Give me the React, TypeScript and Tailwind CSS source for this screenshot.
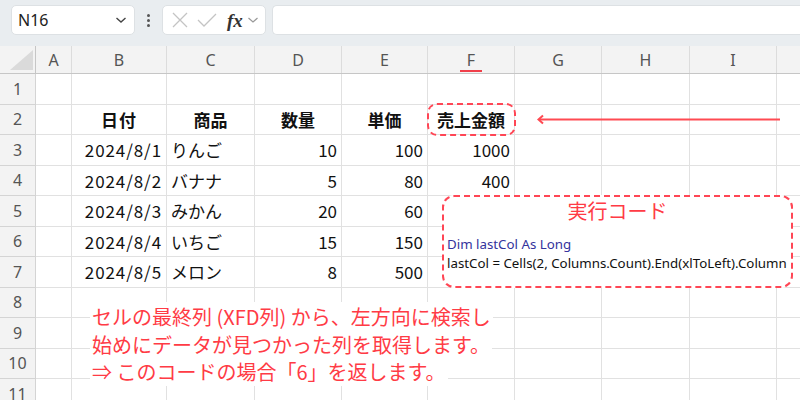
import React from "react";

const colWidths = [36, 95, 88, 87, 86, 87, 87, 88, 87, 87];
const letters = ["A", "B", "C", "D", "E", "F", "G", "H", "I", ""];

type Cell = { text: string; align?: "left" | "right" | "center"; bold?: boolean };

const data: Cell[][] = [
  [],
  [
    { text: "" },
    { text: "日付", align: "center", bold: true },
    { text: "商品", align: "center", bold: true },
    { text: "数量", align: "center", bold: true },
    { text: "単価", align: "center", bold: true },
    { text: "売上金額", align: "center", bold: true },
  ],
  [
    { text: "" },
    { text: "2024/8/1", align: "right" },
    { text: "りんご" },
    { text: "10", align: "right" },
    { text: "100", align: "right" },
    { text: "1000", align: "right" },
  ],
  [
    { text: "" },
    { text: "2024/8/2", align: "right" },
    { text: "バナナ" },
    { text: "5", align: "right" },
    { text: "80", align: "right" },
    { text: "400", align: "right" },
  ],
  [
    { text: "" },
    { text: "2024/8/3", align: "right" },
    { text: "みかん" },
    { text: "20", align: "right" },
    { text: "60", align: "right" },
  ],
  [
    { text: "" },
    { text: "2024/8/4", align: "right" },
    { text: "いちご" },
    { text: "15", align: "right" },
    { text: "150", align: "right" },
  ],
  [
    { text: "" },
    { text: "2024/8/5", align: "right" },
    { text: "メロン" },
    { text: "8", align: "right" },
    { text: "500", align: "right" },
  ],
  [],
  [],
  [],
  [],
];

const font = { fontFamily: '"Noto Sans CJK JP", "Noto Sans", sans-serif' };

function Toolbar() {
  return (
    <div className="h-[46px] bg-[#e9edf0] flex items-start pt-[5px] pl-[11px]">
      {/* Name box */}
      <div className="w-[124px] h-[30px] bg-white rounded-[5px] border border-[#dde1e4] flex items-center justify-between pl-[6px] pr-[7px]">
        <span className="text-[16px] text-[#222]" style={{ fontFamily: '"Noto Sans", sans-serif' }}>
          N16
        </span>
        <svg width="12" height="8" viewBox="0 0 12 8">
          <path d="M1.5 2 L6 6 L10.5 2" fill="none" stroke="#444" strokeWidth="1.4" />
        </svg>
      </div>
      {/* dots */}
      <div className="w-[27px] h-[30px] flex flex-col items-center justify-center gap-[2px]">
        <span className="w-[3px] h-[3px] rounded-full bg-[#555]" />
        <span className="w-[3px] h-[3px] rounded-full bg-[#555]" />
        <span className="w-[3px] h-[3px] rounded-full bg-[#555]" />
      </div>
      {/* formula buttons */}
      <div className="w-[104px] h-[30px] bg-white rounded-[5px] border border-[#dde1e4] flex items-center pl-[8px]">
        <svg width="18" height="18" viewBox="0 0 18 18">
          <path d="M2 2 L16 16 M16 2 L2 16" stroke="#c4c4c4" strokeWidth="1.3" />
        </svg>
        <svg width="22" height="18" viewBox="0 0 22 18" className="ml-[7px]">
          <path d="M2 9 L8 15 L20 3" fill="none" stroke="#c4c4c4" strokeWidth="1.3" />
        </svg>
        <span
          className="ml-[9px] text-[19px] italic font-bold text-[#333] leading-none"
          style={{ fontFamily: '"Liberation Serif", serif' }}
        >
          fx
        </span>
        <svg width="12" height="8" viewBox="0 0 12 8" className="ml-[4px]">
          <path d="M1.5 2 L6 6 L10.5 2" fill="none" stroke="#999" strokeWidth="1.2" />
        </svg>
      </div>
      {/* formula input */}
      <div className="ml-[6px] flex-1 h-[30px] bg-white rounded-l-[5px] border border-r-0 border-[#dde1e4]" />
    </div>
  );
}

function HeaderRow() {
  return (
    <div className="flex h-[28px] bg-[#f3f3f3] border-b border-[#c6c6c6]">
      <div className="w-[36px] shrink-0 border-r border-[#c6c6c6] relative">
        <div
          className="absolute left-[10px] top-[4px] w-[23px] h-[20px] bg-[#dadada]"
          style={{ clipPath: "polygon(100% 0, 100% 100%, 0 100%)" }}
        />
      </div>
      {letters.map((l, i) => (
        <div
          key={i}
          className="shrink-0 border-r border-[#dcdcdc] flex items-center justify-center relative text-[16px] text-[#555]"
          style={{ width: colWidths[i], fontFamily: '"Noto Sans", sans-serif' }}
        >
          {l}
          {l === "F" && (
            <span className="absolute bottom-[1px] left-1/2 -translate-x-1/2 w-[22px] h-[2px] bg-[#f0404a]" />
          )}
        </div>
      ))}
    </div>
  );
}

function Row({ n, cells }: { n: number; cells: Cell[] }) {
  return (
    <div className="flex h-[30.5px]">
      <div
        className="w-[36px] shrink-0 bg-[#f3f3f3] border-r border-b border-[#d4d4d4] flex items-center justify-center text-[16px] text-[#555]"
        style={{ fontFamily: '"Noto Sans", sans-serif' }}
      >
        {n}
      </div>
      {colWidths.map((w, i) => {
        const c = cells[i];
        const align =
          c?.align === "right" ? "justify-end pr-[4px]" : c?.align === "center" ? "justify-center" : "justify-start pl-[4px]";
        const isDate = i === 1 && c?.text;
        return (
          <div
            key={i}
            className={`shrink-0 border-r border-b border-[#e1e1e1] flex items-center text-[17px] text-[#111] whitespace-nowrap ${align} ${
              c?.bold ? "font-bold" : ""
            } ${isDate ? "tracking-[0.9px] text-[17.5px]" : ""}`}
            style={{ width: w, ...font }}
          >
            {c?.text}
          </div>
        );
      })}
    </div>
  );
}

export default function App() {
  return (
    <div className="relative w-[800px] h-[400px] overflow-hidden bg-white">
      <Toolbar />
      <HeaderRow />
      {data.map((cells, i) => (
        <Row key={i} n={i + 1} cells={cells} />
      ))}

      {/* callout around 売上金額 */}
      <div className="absolute left-[427px] top-[103px] w-[89px] h-[33px] border-2 border-dashed border-[#ff4655] rounded-[10px]" />

      {/* arrow */}
      <svg className="absolute left-[534px] top-[112px]" width="250" height="16" viewBox="0 0 250 16">
        <path d="M246 7.5 L5 7.5" stroke="#ff4a52" strokeWidth="2" />
        <path d="M9 3.5 L4.5 7.5 L9 11.5" fill="none" stroke="#ff4a52" strokeWidth="2" />
      </svg>

      {/* code callout */}
      <div className="absolute left-[442px] top-[195px] w-[351px] h-[93px] bg-white border-2 border-dashed border-[#ff4655] rounded-[12px] px-[3px]">
        <div className="text-center text-[20px] leading-[24px] text-[#ff3b45] mt-[2px]" style={font}>
          実行コード
        </div>
        <div className="mt-[12px] text-[13.3px] leading-[19px] whitespace-nowrap" style={{ fontFamily: '"Noto Sans", sans-serif' }}>
          <div className="text-[#33339c]">Dim lastCol As Long</div>
          <div className="text-[#111]">lastCol = Cells(2, Columns.Count).End(xlToLeft).Column</div>
        </div>
      </div>

      {/* explanation text */}
      <div className="absolute left-[90px] top-[303px] text-[20px] leading-[27.5px] text-[#ff3b45]" style={font}>
        <div>
          <span className="bg-white px-[2px]">セルの最終列 (XFD列) から、左方向に検索し</span>
        </div>
        <div>
          <span className="bg-white px-[2px]">始めにデータが見つかった列を取得します。</span>
        </div>
        <div>
          <span className="bg-white px-[2px]">⇒ このコードの場合「6」を返します。</span>
        </div>
      </div>
    </div>
  );
}
